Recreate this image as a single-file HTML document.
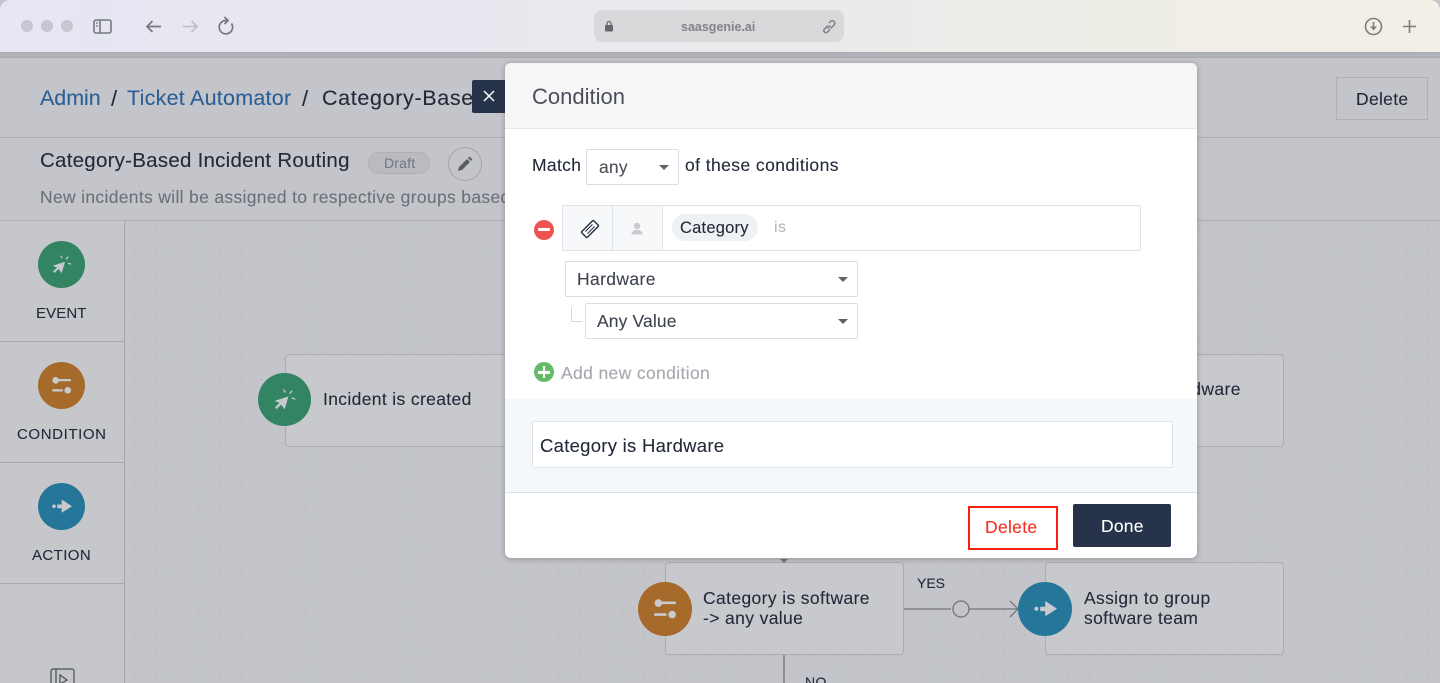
<!DOCTYPE html>
<html><head><meta charset="utf-8"><style>
html,body{margin:0;padding:0;width:1440px;height:683px;overflow:hidden;background:#c4c5ca}
body{font-family:"Liberation Sans",sans-serif;color:#222a3a;position:relative}
.a{position:absolute}
.t{position:absolute;white-space:nowrap;line-height:1;-webkit-text-stroke:.1px currentColor}
.c{position:absolute;border-radius:50%}
.box{position:absolute;box-sizing:border-box;background:#c8c9cd;border:1px solid #abadb3;border-radius:4px}
.sel{position:absolute;box-sizing:border-box;background:#fff;border:1px solid #d9dde3;border-radius:2px}
.car{position:absolute;width:0;height:0;border-left:5px solid transparent;border-right:5px solid transparent;border-top:5px solid #5d626b}
</style></head><body>
<!-- browser chrome -->
<div class="a" style="left:0;top:0;width:1440px;height:52px;border-radius:10px 10px 0 0;background:linear-gradient(90deg,#e6e6f4 0%,#e8e8f0 30%,#eaeaec 55%,#efeee6 80%,#f3eee6 100%)"></div>
<div class="a" style="left:0;top:52px;width:1440px;height:6px;background:linear-gradient(#a9aab0,#b4b5ba 50%,#a9aab0)"></div>
<div class="c" style="left:21px;top:20px;width:12px;height:12px;background:#c6c6d0"></div>
<div class="c" style="left:41px;top:20px;width:12px;height:12px;background:#c6c6d0"></div>
<div class="c" style="left:61px;top:20px;width:12px;height:12px;background:#c6c6d0"></div>
<svg class="a" style="left:0;top:0" width="1440" height="52" fill="none" stroke="#77787f" stroke-width="1.6">
<rect x="94" y="20" width="17" height="13" rx="2"/><path d="M100 20v13"/><path d="M96 23h2M96 26h2" stroke-width="1.2"/>
<path d="M161 26.500h-14M152.500 21l-5.500 5.500 5.500 5.500" stroke-width="1.7"/>
<path d="M183 26.500h14M191.500 21l5.500 5.500-5.500 5.500" stroke="#bcbdc6" stroke-width="1.6"/>
<path d="M231.500 23.500A6.700 6.700 0 1 1 226.500 20.500M224.500 17l3.500 3.500-3.500 3.500" stroke-width="1.7"/>
<circle cx="1373.500" cy="26.500" r="8" stroke="#7c7d80"/><path d="M1373.500 22v6" stroke="#7c7d80"/><path d="M1370 26.500l3.500 4 3.500-4z" fill="#7c7d80" stroke="none"/>
<path d="M1409.500 20v13M1403 26.500h13" stroke="#7c7d80"/>
</svg>
<div class="a" style="left:594px;top:10px;width:250px;height:32px;border-radius:8px;background:#d9d9dc"></div>
<svg class="a" style="left:604px;top:20px" width="12" height="13"><rect x="1" y="5" width="8" height="6.500" rx="1" fill="#66676c"/><path d="M3 5V3.500a2 2 0 0 1 4 0V5" fill="none" stroke="#66676c" stroke-width="1.200"/></svg>
<svg class="a" style="left:820px;top:18px" width="18" height="18" fill="none" stroke="#808186" stroke-width="1.500"><path d="M8 7.500l-4 4a2.300 2.300 0 0 0 3 3l3-3M7.500 10.500l3-3M9 5l1.500-1.500a2.400 2.400 0 0 1 3.500 3.500l-3.500 3.500"/></svg>
<div class="t" style="left:681px;top:21px;font-size:12.5px;color:#77787d;font-weight:bold;opacity:.85">saasgenie.ai</div>

<!-- page header -->
<div class="a" style="left:0;top:137px;width:1440px;height:1px;background:#aeafb5"></div>
<div class="a" style="left:0;top:220px;width:1440px;height:1px;background:#aeafb5"></div>
<div class="t" style="left:40px;top:88px;font-size:21.5px;color:#2a5f96;letter-spacing:-.05px">Admin</div>
<div class="t" style="left:111px;top:88px;font-size:22px;color:#222a3a">/</div>
<div class="t" style="left:127px;top:88px;font-size:21.5px;color:#2a5f96;letter-spacing:.24px">Ticket Automator</div>
<div class="t" style="left:302px;top:88px;font-size:22px;color:#222a3a">/</div>
<div class="t" style="left:322px;top:88px;font-size:21.5px;letter-spacing:.65px;width:150px;overflow:hidden">Category-Based</div>
<div class="a" style="left:1336px;top:77px;width:92px;height:43px;box-sizing:border-box;border:1px solid #afb0b6"></div>
<div class="t" style="left:1356px;top:91px;font-size:17.5px;letter-spacing:.3px">Delete</div>
<div class="t" style="left:40px;top:151px;font-size:20.500px;letter-spacing:.25px">Category-Based Incident Routing</div>
<div class="a" style="left:368px;top:152px;width:62px;height:22px;box-sizing:border-box;border:1px solid #b0b1b6;border-radius:11px;background:#babbc0"></div>
<div class="t" style="left:384px;top:156px;font-size:14px;color:#787a82;letter-spacing:.2px">Draft</div>
<div class="c" style="left:448px;top:147px;width:34px;height:34px;box-sizing:border-box;border:1px solid #a4a5ab"></div>
<svg class="a" style="left:456px;top:155px" width="18" height="18"><path d="M2 16l1-4 8-8 3 3-8 8zM12 3l1.500-1.500 3 3L15 6z" fill="#5a5c63"/></svg>
<div class="t" style="left:40px;top:189px;font-size:17.5px;color:#6d7078;letter-spacing:.32px">New incidents will be assigned to respective groups based on category</div>

<!-- canvas -->
<svg class="a" style="left:125px;top:221px" width="1315" height="462"><defs><pattern id="d" x="0" y="0" width="21.200" height="21.200" patternUnits="userSpaceOnUse"><path d="M0 10.500h21.200M10 0v21.200" stroke="#c1c3c8" stroke-width="1"/><circle cx="10" cy="10.500" r="1" fill="#babcc2"/></pattern></defs><rect width="1315" height="462" fill="#c3c5ca"/><rect width="1315" height="462" fill="url(#d)"/></svg>

<!-- sidebar -->
<div class="a" style="left:0;top:221px;width:124px;height:462px;background:#c6c7cb"></div>
<div class="a" style="left:124px;top:221px;width:1px;height:462px;background:#a6a7ad"></div>
<div class="a" style="left:0;top:341px;width:124px;height:1px;background:#a9aab0"></div>
<div class="a" style="left:0;top:462px;width:124px;height:1px;background:#a9aab0"></div>
<div class="a" style="left:0;top:583px;width:124px;height:1px;background:#a9aab0"></div>
<div class="c" style="left:38px;top:241px;width:47px;height:47px;background:#338463"></div>
<div class="c" style="left:38px;top:362px;width:47px;height:47px;background:#a66a2a"></div>
<div class="c" style="left:38px;top:483px;width:47px;height:47px;background:#257699"></div>
<svg class="a" style="left:38px;top:241px" width="47" height="47" viewBox="0 0 47 47"><path d="M27 20.700L14.700 24.700 19 26.500 15 30.500 16.500 32 20.500 28 23.700 32.300z" fill="#c9cacf"/><path d="M22.700 14.700l1.600 2.600M30.300 15.700L28 18.300M33 23.300L30 22" stroke="#c9cacf" stroke-width="1.200"/></svg>
<svg class="a" style="left:38px;top:362px" width="47" height="47" fill="#c9cacf"><circle cx="17.700" cy="18.300" r="3.300"/><rect x="20" y="17" width="13" height="2.300" rx="1"/><circle cx="29.700" cy="28.300" r="3.300"/><rect x="14" y="27.200" width="11" height="2.300" rx="1"/></svg>
<svg class="a" style="left:38px;top:483px" width="47" height="47" fill="#c9cacf"><circle cx="16" cy="23.300" r="1.800"/><path d="M19.300 21.500h4.400v-5L34 23.300l-10.300 6.500v-4.500h-4.400z"/></svg>
<div class="t" style="left:36px;top:306px;font-size:15px;letter-spacing:.1px">EVENT</div>
<div class="t" style="left:17px;top:427px;font-size:15px;letter-spacing:.6px">CONDITION</div>
<div class="t" style="left:32px;top:548px;font-size:15px;letter-spacing:.4px">ACTION</div>
<svg class="a" style="left:49px;top:668px" width="28" height="15" fill="none" stroke="#4a4d55" stroke-width="1.200"><path d="M2 15V3a2 2 0 0 1 2-2h19a2 2 0 0 1 2 2v12M7 1v14M11 7l7 5-7 4z"/></svg>

<!-- flow nodes -->
<div class="box" style="left:285px;top:354px;width:240px;height:93px"></div>
<div class="c" style="left:258px;top:373px;width:53px;height:53px;background:#338463"></div>
<svg class="a" style="left:258px;top:373px" width="53" height="53" viewBox="0 0 47 47"><path d="M27 20.700L14.700 24.700 19 26.500 15 30.500 16.500 32 20.500 28 23.700 32.300z" fill="#c9cacf"/><path d="M22.700 14.700l1.600 2.600M30.300 15.700L28 18.300M33 23.300L30 22" stroke="#c9cacf" stroke-width="1.200"/></svg>
<div class="t" style="left:323px;top:391px;font-size:17.5px;letter-spacing:.35px">Incident is created</div>

<div class="box" style="left:1100px;top:354px;width:184px;height:93px"></div>
<div class="t" style="left:1162px;top:381px;font-size:17.5px;letter-spacing:.37px">Hardware</div>

<div class="box" style="left:665px;top:562px;width:239px;height:93px"></div>
<div class="c" style="left:638px;top:582px;width:54px;height:54px;background:#a66a2a"></div>
<svg class="a" style="left:638px;top:582px" width="54" height="54" viewBox="0 0 47 47" fill="#c9cacf"><circle cx="17.700" cy="18.300" r="3.300"/><rect x="20" y="17" width="13" height="2.300" rx="1"/><circle cx="29.700" cy="28.300" r="3.300"/><rect x="14" y="27.200" width="11" height="2.300" rx="1"/></svg>
<div class="t" style="left:703px;top:590px;font-size:17.5px;letter-spacing:.37px">Category is software</div>
<div class="t" style="left:703px;top:610px;font-size:17.5px;letter-spacing:.37px">-&gt; any value</div>
<div class="t" style="left:917px;top:576px;font-size:14px">YES</div>
<div class="t" style="left:805px;top:675px;font-size:14px;letter-spacing:.4px">NO</div>
<svg class="a" style="left:770px;top:550px" width="300" height="133" fill="none" stroke="#72747b" stroke-width="1.300"><path d="M14 105V133M134 59h47M199 59h49M240 51l8 8-8 8"/><circle cx="191" cy="59" r="8"/><path d="M10 9l4 4 4-4z" fill="#72747b" stroke="none"/></svg>

<div class="box" style="left:1045px;top:562px;width:239px;height:93px"></div>
<div class="c" style="left:1018px;top:582px;width:54px;height:54px;background:#257699"></div>
<svg class="a" style="left:1018px;top:582px" width="54" height="54" viewBox="0 0 47 47" fill="#c9cacf"><circle cx="16" cy="23.300" r="1.800"/><path d="M19.300 21.500h4.400v-5L34 23.300l-10.300 6.500v-4.500h-4.400z"/></svg>
<div class="t" style="left:1084px;top:590px;font-size:17.5px;letter-spacing:.33px">Assign to group</div>
<div class="t" style="left:1084px;top:610px;font-size:17.5px;letter-spacing:.33px">software team</div>

<!-- modal close tab -->
<div class="a" style="left:472px;top:80px;width:34px;height:33px;border-radius:2px 0 0 2px;background:#26334a"></div>
<svg class="a" style="left:482px;top:89px" width="15" height="15" stroke="#fff" stroke-width="1.500"><path d="M2 2l10 10M12 2L2 12"/></svg>

<!-- modal -->
<div class="a" style="left:505px;top:63px;width:692px;height:495px;background:#fff;border-radius:6px;box-shadow:0 1px 6px rgba(40,42,50,.35);overflow:hidden">
 <div class="a" style="left:0;top:0;width:692px;height:65px;background:#f6f6f7;border-bottom:1px solid #e6e7e9"></div>
 <div class="a" style="left:0;top:336px;width:692px;height:93px;background:#f5f8fa;border-bottom:1px solid #dcdfe3"></div>
</div>
<div class="t" style="left:532px;top:86px;font-size:22px;color:#4a4f59;-webkit-text-stroke:0">Condition</div>
<div class="t" style="left:532px;top:157px;font-size:17.5px;letter-spacing:.32px">Match</div>
<div class="sel" style="left:586px;top:149px;width:93px;height:36px"></div>
<div class="t" style="left:599px;top:159px;font-size:17.5px;color:#4a4f59;letter-spacing:.2px">any</div>
<div class="car" style="left:659px;top:165px"></div>
<div class="t" style="left:685px;top:157px;font-size:17.5px;letter-spacing:.42px">of these conditions</div>

<div class="c" style="left:534px;top:220px;width:20px;height:20px;background:#ef5350"></div>
<div class="a" style="left:538px;top:228px;width:12px;height:3px;background:#fff;border-radius:1px"></div>
<div class="a" style="left:562px;top:205px;width:579px;height:46px;box-sizing:border-box;border:1px solid #dfe2e6;background:#fff"></div>
<div class="a" style="left:563px;top:206px;width:100px;height:44px;background:#f6f8fa"></div>
<div class="a" style="left:612px;top:206px;width:1px;height:44px;background:#dfe2e6"></div>
<div class="a" style="left:662px;top:206px;width:1px;height:44px;background:#dfe2e6"></div>
<svg class="a" style="left:580px;top:219px" width="20" height="20" fill="none" stroke="#2a3040" stroke-width="1.400"><g transform="rotate(45 10 10)"><rect x="6" y="1.500" width="8" height="17" rx="1"/><path d="M8.500 5v10M11.500 5v10" stroke-width="1"/></g></svg>
<svg class="a" style="left:630px;top:222px" width="14" height="14" fill="#c8cacd"><circle cx="7" cy="4" r="3.200"/><path d="M1.500 12.500c0-3 2-4 3.500-4.500h4c1.500.5 3.500 1.500 3.500 4.500z"/></svg>
<div class="a" style="left:672px;top:214px;width:86px;height:27px;border-radius:14px;background:#eff2f5"></div>
<div class="t" style="left:680px;top:220px;font-size:16.5px;letter-spacing:.22px">Category</div>
<div class="t" style="left:774px;top:220px;font-size:16px;color:#b5b8bd;letter-spacing:.5px">is</div>

<div class="sel" style="left:565px;top:261px;width:293px;height:36px"></div>
<div class="t" style="left:577px;top:271px;font-size:17.5px;color:#3c424e;letter-spacing:.37px">Hardware</div>
<div class="car" style="left:838px;top:277px"></div>
<div class="a" style="left:571px;top:307px;width:10px;height:14px;border-left:1px solid #d5d8dc;border-bottom:1px solid #d5d8dc"></div>
<div class="sel" style="left:585px;top:303px;width:273px;height:36px"></div>
<div class="t" style="left:597px;top:313px;font-size:17.5px;color:#3c424e;letter-spacing:.12px">Any Value</div>
<div class="car" style="left:838px;top:319px"></div>

<div class="c" style="left:534px;top:362px;width:20px;height:20px;background:#66bb6a"></div>
<div class="a" style="left:538px;top:371px;width:12px;height:2.500px;background:#fff"></div>
<div class="a" style="left:542.800px;top:366px;width:2.500px;height:12px;background:#fff"></div>
<div class="t" style="left:561px;top:365px;font-size:17.5px;color:#a4a7ad;letter-spacing:.36px">Add new condition</div>

<div class="a" style="left:532px;top:421px;width:641px;height:47px;box-sizing:border-box;background:#fff;border:1px solid #e0e3e8;border-radius:2px"></div>
<div class="t" style="left:540px;top:437px;font-size:18.5px;letter-spacing:.27px">Category is Hardware</div>

<div class="a" style="left:968px;top:506px;width:90px;height:44px;box-sizing:border-box;border:2px solid #f5200f"></div>
<div class="t" style="left:985px;top:519px;font-size:17.5px;color:#f5301f;letter-spacing:.3px">Delete</div>
<div class="a" style="left:1073px;top:504px;width:98px;height:43px;background:#26334a;border-radius:2px"></div>
<div class="t" style="left:1101px;top:518px;font-size:17.5px;color:#fff;letter-spacing:.2px">Done</div>
</body></html>
